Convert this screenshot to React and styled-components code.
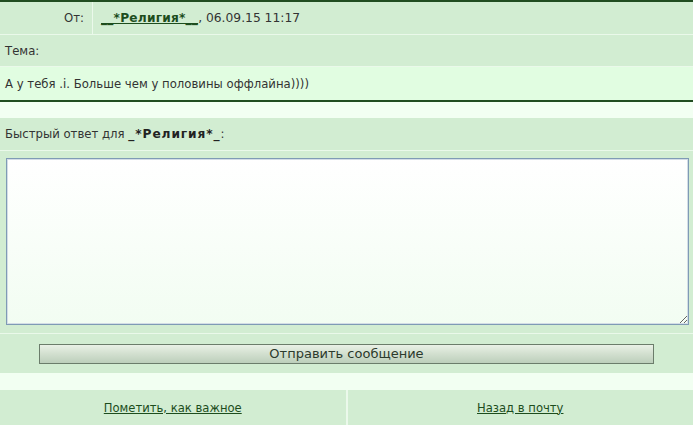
import styled, { createGlobalStyle } from 'styled-components';

const GlobalStyle = createGlobalStyle`
	html, body {
		margin: 0;
		padding: 0;
		background: #f0fff0;
	}
	body {
		font-family: Tahoma, "DejaVu Sans", Verdana, sans-serif;
		font-size: 11.7px;
		color: #333333;
	}
`;

const Page = styled.div`
	width: 693px;
	height: 425px;
	overflow: hidden;
	background: #f2fff2;
	display: flex;
	flex-direction: column;
`;

const Header = styled.div`
	border-top: 2px solid #214d21;
	border-bottom: 2px solid #214d21;
	display: flex;
	flex-direction: column;
`;

const Row = styled.div`
	display: flex;
	align-items: center;
	height: ${p => p.$h || 32}px;
	background: ${p => (p.$light ? '#e1fde1' : '#d2edd2')};
	border-bottom: ${p => (p.$line ? '1px solid #eaf9ea' : 'none')};
	padding: ${p => (p.$cells ? '0' : '0 5px')};
`;

const LabelCell = styled.div`
	width: 84px;
	height: 100%;
	display: flex;
	align-items: center;
	justify-content: flex-end;
	padding-right: 8px;
	border-right: 1px solid #ebf9eb;
`;

const ValueCell = styled.div`
	flex: 1;
	padding-left: 8px;
	font-size: 12.3px;
`;

const Author = styled.a`
	color: #1d4d1d;
	font-weight: bold;
	font-size: 12.2px;
	letter-spacing: 0.2px;
	text-decoration: underline;
	cursor: pointer;
`;

const Strong = styled.b`
	color: #222222;
	font-size: 12.2px;
	letter-spacing: 0.9px;
`;

const Gap = styled.div`
	height: ${p => p.$h}px;
	background: #f2fff2;
`;

const ReplyArea = styled.div`
	background: #d2edd2;
	padding: 7px 5px 8px 6px;
	border-bottom: 1px solid #eaf9ea;
`;

const TextBox = styled.textarea`
	display: block;
	box-sizing: border-box;
	width: 683px;
	height: 167px;
	border: 1px solid #7f9bb5;
	box-shadow: inset 0 0 0 1px #d3dde6;
	background: linear-gradient(180deg, #ffffff 0%, #f2fdf2 100%);
	resize: both;
	outline: none;
	font-family: inherit;
	font-size: 12px;
`;

const ButtonRow = styled.div`
	height: 39px;
	background: #d2edd2;
	display: flex;
	align-items: center;
	padding-left: 39px;
`;

const SendButton = styled.button`
	width: 615px;
	height: 20px;
	box-sizing: border-box;
	border: 1px solid #6b7d6b;
	background: linear-gradient(180deg, #e9f1e6 0%, #d2dfcf 50%, #bccfbb 100%);
	font-family: inherit;
	font-size: 13px;
	color: #2c3a2c;
	padding: 0;
	cursor: pointer;
`;

const Footer = styled.div`
	display: flex;
	height: 35px;
	background: #d2edd2;
`;

const FooterCell = styled.div`
	flex: 1;
	display: flex;
	align-items: center;
	justify-content: center;
	border-left: ${p => (p.$sep ? '2px solid #ebf9eb' : 'none')};
`;

const FooterLink = styled.a`
	color: #1d4d1d;
	font-size: 11.6px;
	text-decoration: underline;
	cursor: pointer;
`;

export default function App() {
	return (
		<Page>
			<GlobalStyle />
			<Header>
				<Row $cells $line $h={32}>
					<LabelCell>От:</LabelCell>
					<ValueCell>
						<Author>__*Религия*__</Author>, 06.09.15 11:17
					</ValueCell>
				</Row>
				<Row $line $h={31}>Тема:</Row>
				<Row $light $h={33}>А у тебя .i. Больше чем у половины оффлайна))))</Row>
			</Header>
			<Gap $h={16} />
			<Row $line $h={32}>
				<span>
					Быстрый ответ для <Strong>_*Религия*_</Strong>:
				</span>
			</Row>
			<ReplyArea>
				<TextBox />
			</ReplyArea>
			<ButtonRow>
				<SendButton>Отправить сообщение</SendButton>
			</ButtonRow>
			<Gap $h={17} />
			<Footer>
				<FooterCell>
					<FooterLink>Пометить, как важное</FooterLink>
				</FooterCell>
				<FooterCell $sep>
					<FooterLink>Назад в почту</FooterLink>
				</FooterCell>
			</Footer>
		</Page>
	);
}
